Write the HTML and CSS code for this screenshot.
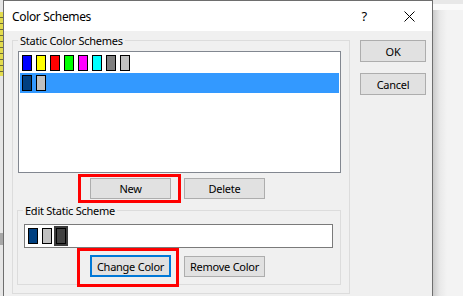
FILE: index.html
```html
<!DOCTYPE html>
<html lang="en">
<head>
    <meta charset="UTF-8">
    <meta name="viewport" content="width=device-width, initial-scale=1.0">
    <title>Color Schemes</title>
    <link rel="stylesheet" href="styles.css">
</head>
<body>
    <div class="screen">
        <div class="backdrop-left"></div>

        <div class="dialog">
            <div class="titlebar">
                <span class="title">Color Schemes</span>
                <span class="help">?</span>
                <svg class="close" width="11" height="11" viewBox="0 0 11 11">
                    <path d="M0.5 0.5 L10.5 10.5 M10.5 0.5 L0.5 10.5" stroke="#000" stroke-width="1" fill="none"/>
                </svg>
            </div>

            <div class="dialog-body">
                <div class="group group-main">
                    <div class="group-label">Static Color Schemes</div>

                    <div class="listbox">
                        <div class="list-row">
                            <span class="swatch sw-blue"></span>
                            <span class="swatch sw-yellow"></span>
                            <span class="swatch sw-red"></span>
                            <span class="swatch sw-green"></span>
                            <span class="swatch sw-magenta"></span>
                            <span class="swatch sw-cyan"></span>
                            <span class="swatch sw-grey"></span>
                            <span class="swatch sw-silver"></span>
                        </div>
                        <div class="list-row selected">
                            <span class="swatch sw-navy"></span>
                            <span class="swatch sw-silver"></span>
                        </div>
                    </div>

                    <div class="button-row row-scheme">
                        <button class="btn callout callout-new">New</button>
                        <button class="btn">Delete</button>
                    </div>

                    <div class="group group-edit">
                        <div class="group-label">Edit Static Scheme</div>
                        <div class="editbox">
                            <span class="swatch sw-navy"></span>
                            <span class="swatch sw-silver"></span>
                            <span class="swatch sw-dark current"></span>
                        </div>
                        <div class="button-row row-edit">
                            <button class="btn btn-focus callout callout-change">Change Color</button>
                            <button class="btn">Remove Color</button>
                        </div>
                    </div>
                </div>

                <div class="side-buttons">
                    <button class="btn btn-side">OK</button>
                    <button class="btn btn-side">Cancel</button>
                </div>
            </div>
        </div>

        <div class="backdrop-right"></div>
    </div>
</body>
</html>
```

FILE: styles.css
```css
body {
    margin: 0;
    font-family: 'Noto Sans', sans-serif;
    font-size: 11px;
    letter-spacing: -0.25px;
    color: #000;
}
.screen {
    display: flex;
    width: 463px;
    height: 296px;
    overflow: hidden;
    background-color: #f3f3f3;
}
.backdrop-left {
    width: 3px;
    flex: none;
    background:
        linear-gradient(to bottom, transparent 0 233px, #a8a8a8 233px 245px, transparent 245px),
        repeating-linear-gradient(to bottom, #e3dc4e 0 5px, #6b6b3a 5px 6px) 0 12px / 3px 64px no-repeat,
        #e6e6e6;
}
.dialog {
    width: 430px;
    flex: none;
    box-sizing: border-box;
    border: 1px solid #6e6e6e;
    border-bottom: none;
    background-color: #f0f0f0;
    display: flex;
    flex-direction: column;
}
.backdrop-right {
    flex: 1;
    background:
        linear-gradient(to bottom, #e8e8e8 0 4px, #fafafa 4px 10px, transparent 10px),
        linear-gradient(to right, #cbcbcb, #e9e9e9 7px, #f3f3f3 14px);
}

/* title bar */
.titlebar {
    height: 30px;
    flex: none;
    background-color: #fff;
    display: flex;
    align-items: center;
    padding-left: 8px;
}
.title {
    font-size: 12px;
    letter-spacing: -0.35px;
}
.help {
    margin-left: auto;
    font-size: 13px;
}
.close {
    margin: 0 17px 0 37px;
}

/* body */
.dialog-body {
    display: flex;
    gap: 10px;
    padding: 9px 0 0 8px;
}
.group {
    box-sizing: border-box;
    border: 1px solid #dcdcdc;
}
.group-main {
    width: 338px;
    height: 254px;
}
.group-label {
    width: max-content;
    margin: -8px 0 0 5px;
    padding: 0 2px;
    line-height: 16px;
    background-color: #f0f0f0;
}
.listbox {
    width: 323px;
    height: 122px;
    box-sizing: border-box;
    margin: 2px 0 0 5px;
    padding: 1px;
    border: 1px solid #828790;
    background-color: #fff;
}
.list-row {
    height: 20px;
    box-sizing: border-box;
    display: flex;
    gap: 4px;
    padding: 2px 0 0 2px;
}
.list-row.selected {
    background-color: #3399ff;
}
.swatch {
    width: 10px;
    height: 16px;
    box-sizing: border-box;
    border: 1px solid #000;
    flex: none;
}
.sw-blue { background-color: #0000ff; }
.sw-yellow { background-color: #ffff00; }
.sw-red { background-color: #ff0000; }
.sw-green { background-color: #00ff00; }
.sw-magenta { background-color: #ff00ff; }
.sw-cyan { background-color: #00ffff; }
.sw-grey { background-color: #808080; }
.sw-silver { background-color: #c0c0c0; }
.sw-navy { background-color: #004080; }
.sw-dark { background-color: #424242; }
.swatch.current {
    box-shadow: 0 0 0 2px #3c3c3c;
}

/* buttons */
.button-row {
    display: flex;
    align-items: center;
    gap: 13px;
}
.row-scheme {
    margin: 5px 0 0 77px;
}
.row-edit {
    margin: 7px 0 0 72px;
}
.btn {
    width: 81px;
    height: 21px;
    box-sizing: border-box;
    padding: 0;
    border: 1px solid #adadad;
    background-color: #e1e1e1;
    font: inherit;
    letter-spacing: inherit;
    color: #000;
}
.btn-focus {
    height: 22px;
    border: 2px solid #0078d7;
}
.side-buttons {
    display: flex;
    flex-direction: column;
    gap: 11px;
}
.btn-side {
    width: 66px;
    height: 22px;
}

/* edit group */
.group-edit {
    width: 324px;
    margin: 11px 0 0 4px;
    padding-bottom: 7px;
}
.editbox {
    width: 309px;
    height: 24px;
    box-sizing: border-box;
    margin: 5px 0 0 6px;
    padding: 3px;
    border: 1px solid #7a7a7a;
    background-color: #fff;
    display: flex;
    gap: 4px;
}

/* red annotation boxes */
.callout {
    position: relative;
}
.callout::after {
    content: "";
    position: absolute;
    border: 3px solid #ff0000;
}
.callout-new::after {
    top: -5px;
    left: -13px;
    right: -11px;
    bottom: -5px;
}
.callout-change::after {
    top: -9px;
    left: -15px;
    right: -10px;
    bottom: -12px;
}
```
